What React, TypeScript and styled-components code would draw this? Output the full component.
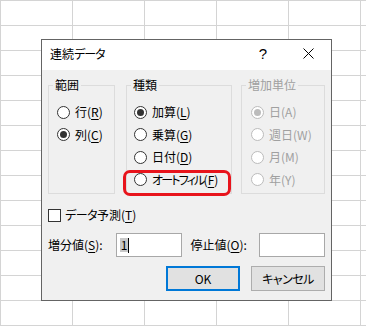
import React from "react";
import styled, { createGlobalStyle } from "styled-components";

const GlobalStyle = createGlobalStyle`
  html, body {
    margin: 0;
    padding: 0;
  }
  body {
    font-family: "Noto Sans CJK JP", "Noto Sans", sans-serif;
    font-size: 12px;
    font-feature-settings: "palt";
    color: #000;
    white-space: nowrap;
  }
`;

const Sheet = styled.div`
  position: relative;
  width: 366px;
  height: 326px;
  overflow: hidden;
  background-color: #fff;
  background-image: linear-gradient(to right, #d4d4d4 1px, transparent 1px),
    linear-gradient(to bottom, #d4d4d4 1px, transparent 1px);
  background-size: 72px 25px;
`;

const Dialog = styled.div`
  position: absolute;
  left: 41px;
  top: 39px;
  width: 291px;
  height: 262px;
  box-sizing: border-box;
  border: 1px solid #646464;
  background: #f0f0f0;
  display: flex;
  flex-direction: column;
`;

const TitleBar = styled.div`
  height: 30px;
  background: #fff;
  display: flex;
  align-items: center;
  padding-left: 8px;
  line-height: 16px;
`;

const Title = styled.div`
  flex: 1;
  margin-top: -3px;
`;

const HelpBox = styled.div`
  width: 30px;
  text-align: center;
  font-family: "Liberation Sans", sans-serif;
  font-size: 15px;
  margin-right: 7px;
  margin-top: -2px;
`;

const CloseBox = styled.div`
  width: 46px;
  height: 30px;
  display: flex;
  align-items: center;
  justify-content: center;
  padding-bottom: 4px;
  box-sizing: border-box;
`;

const Body = styled.div`
  flex: 1;
  display: flex;
  flex-direction: column;
  padding: 0 6px 0 6px;
`;

const GroupsRow = styled.div`
  display: flex;
  margin-top: 15px;
  height: 109px;
`;

const Group = styled.div<{ $w: number; $ml?: number; $pl: number }>`
  position: relative;
  box-sizing: border-box;
  width: ${(p) => p.$w}px;
  margin-left: ${(p) => p.$ml ?? 0}px;
  border: 1px solid #dcdcdc;
  padding: 15px 0 0 ${(p) => p.$pl}px;
`;

const Legend = styled.div<{ $disabled?: boolean }>`
  position: absolute;
  top: -9px;
  left: 4px;
  padding: 0 2px;
  line-height: 16px;
  background: #f0f0f0;
  color: ${(p) => (p.$disabled ? "#a0a0a0" : "#000")};
`;

const OptionRow = styled.div<{ $disabled?: boolean }>`
  display: flex;
  align-items: center;
  gap: 5px;
  height: 22.5px;
  line-height: 16px;
  color: ${(p) => (p.$disabled ? "#a0a0a0" : "#000")};
`;

const RadioCircle = styled.span<{ $disabled?: boolean }>`
  width: 13px;
  height: 13px;
  box-sizing: border-box;
  border-radius: 50%;
  border: 1px solid ${(p) => (p.$disabled ? "#bcbcbc" : "#333")};
  background: #fff;
  display: flex;
  align-items: center;
  justify-content: center;
  flex-shrink: 0;
`;

const RadioDot = styled.span<{ $disabled?: boolean }>`
  width: 7px;
  height: 7px;
  border-radius: 50%;
  background: ${(p) => (p.$disabled ? "#bcbcbc" : "#333")};
`;

const Kana = styled.span<{ $ls: number }>`
  letter-spacing: ${(p) => p.$ls}px;
`;

const Key = styled.span`
  text-decoration: underline;
  text-underline-offset: 2px;
`;

const CheckRow = styled.div`
  display: flex;
  align-items: center;
  gap: 4px;
  height: 16px;
  margin-top: 13px;
  line-height: 16px;
`;

const CheckBox = styled.span`
  width: 13px;
  height: 13px;
  box-sizing: border-box;
  border: 1px solid #333;
  background: #fff;
`;

const InputRow = styled.div`
  display: flex;
  align-items: center;
  height: 24px;
  margin-top: 10px;
  line-height: 16px;
`;

const FieldLabel = styled.div<{ $w: number; $ml?: number }>`
  width: ${(p) => p.$w}px;
  margin-left: ${(p) => p.$ml ?? 0}px;
`;

const TextBox = styled.div`
  width: 66px;
  height: 24px;
  box-sizing: border-box;
  border: 1px solid #a8a8a8;
  background: #fff;
  display: flex;
  align-items: center;
  padding-left: 3px;
`;

const Selected = styled.span`
  background: #c8c8c8;
  line-height: 14px;
  padding: 0 1px;
`;

const Caret = styled.span`
  width: 1px;
  height: 15px;
  background: #000;
`;

const ButtonRow = styled.div`
  display: flex;
  justify-content: flex-end;
  gap: 11px;
  margin-top: 9px;
`;

const Button = styled.div<{ $default?: boolean }>`
  width: 74px;
  height: 25px;
  box-sizing: border-box;
  background: #e1e1e1;
  border: ${(p) => (p.$default ? "2px solid #0078d7" : "1px solid #adadad")};
  display: flex;
  align-items: center;
  justify-content: center;
  line-height: 16px;
`;

const Highlight = styled.div`
  position: absolute;
  left: 81px;
  top: 130px;
  width: 108px;
  height: 26px;
  box-sizing: border-box;
  border: 3px solid #e8141c;
  border-radius: 7px;
`;

type Opt = { label: string; key: string; checked?: boolean; ls?: number };

const Radio = ({ opt, disabled }: { opt: Opt; disabled?: boolean }) => (
  <OptionRow $disabled={disabled}>
    <RadioCircle $disabled={disabled}>
      {opt.checked && <RadioDot $disabled={disabled} />}
    </RadioCircle>
    <span>
      <Kana $ls={opt.ls ?? 0}>{opt.label}</Kana>(
      {disabled ? opt.key : <Key>{opt.key}</Key>})
    </span>
  </OptionRow>
);

const rangeOpts: Opt[] = [
  { label: "行", key: "R" },
  { label: "列", key: "C", checked: true },
];

const typeOpts: Opt[] = [
  { label: "加算", key: "L", checked: true },
  { label: "乗算", key: "G" },
  { label: "日付", key: "D" },
  { label: "オートフィル", key: "F", ls: -1.8 },
];

const unitOpts: Opt[] = [
  { label: "日", key: "A", checked: true },
  { label: "週日", key: "W" },
  { label: "月", key: "M" },
  { label: "年", key: "Y" },
];

const App = () => {
  return (
    <>
      <GlobalStyle />
      <Sheet>
        <Dialog>
          <TitleBar>
            <Title>
              連続<Kana $ls={-1}>データ</Kana>
            </Title>
            <HelpBox>?</HelpBox>
            <CloseBox>
              <svg width="11" height="11" viewBox="0 0 11 11">
                <path d="M0.5 0.5 L10.5 10.5 M10.5 0.5 L0.5 10.5" stroke="#000" strokeWidth="1" fill="none" />
              </svg>
            </CloseBox>
          </TitleBar>
          <Body>
            <GroupsRow>
              <Group $w={67} $pl={8}>
                <Legend>範囲</Legend>
                {rangeOpts.map((o) => (
                  <Radio key={o.key} opt={o} />
                ))}
              </Group>
              <Group $w={106} $ml={11} $pl={7}>
                <Legend>種類</Legend>
                {typeOpts.map((o) => (
                  <Radio key={o.key} opt={o} />
                ))}
              </Group>
              <Group $w={84} $ml={9} $pl={9}>
                <Legend $disabled>増加単位</Legend>
                {unitOpts.map((o) => (
                  <Radio key={o.key} opt={o} disabled />
                ))}
              </Group>
            </GroupsRow>
            <CheckRow>
              <CheckBox />
              <span>
                <Kana $ls={-0.5}>データ</Kana>予測(<Key>T</Key>)
              </span>
            </CheckRow>
            <InputRow>
              <FieldLabel $w={68}>
                増分値(<Key>S</Key>):
              </FieldLabel>
              <TextBox>
                <Selected>1</Selected>
                <Caret />
              </TextBox>
              <FieldLabel $w={69} $ml={9}>
                停止値(<Key>O</Key>):
              </FieldLabel>
              <TextBox />
            </InputRow>
            <ButtonRow>
              <Button $default>OK</Button>
              <Button>
                <Kana $ls={-0.5}>キャンセル</Kana>
              </Button>
            </ButtonRow>
          </Body>
          <Highlight />
        </Dialog>
      </Sheet>
    </>
  );
};

export default App;
